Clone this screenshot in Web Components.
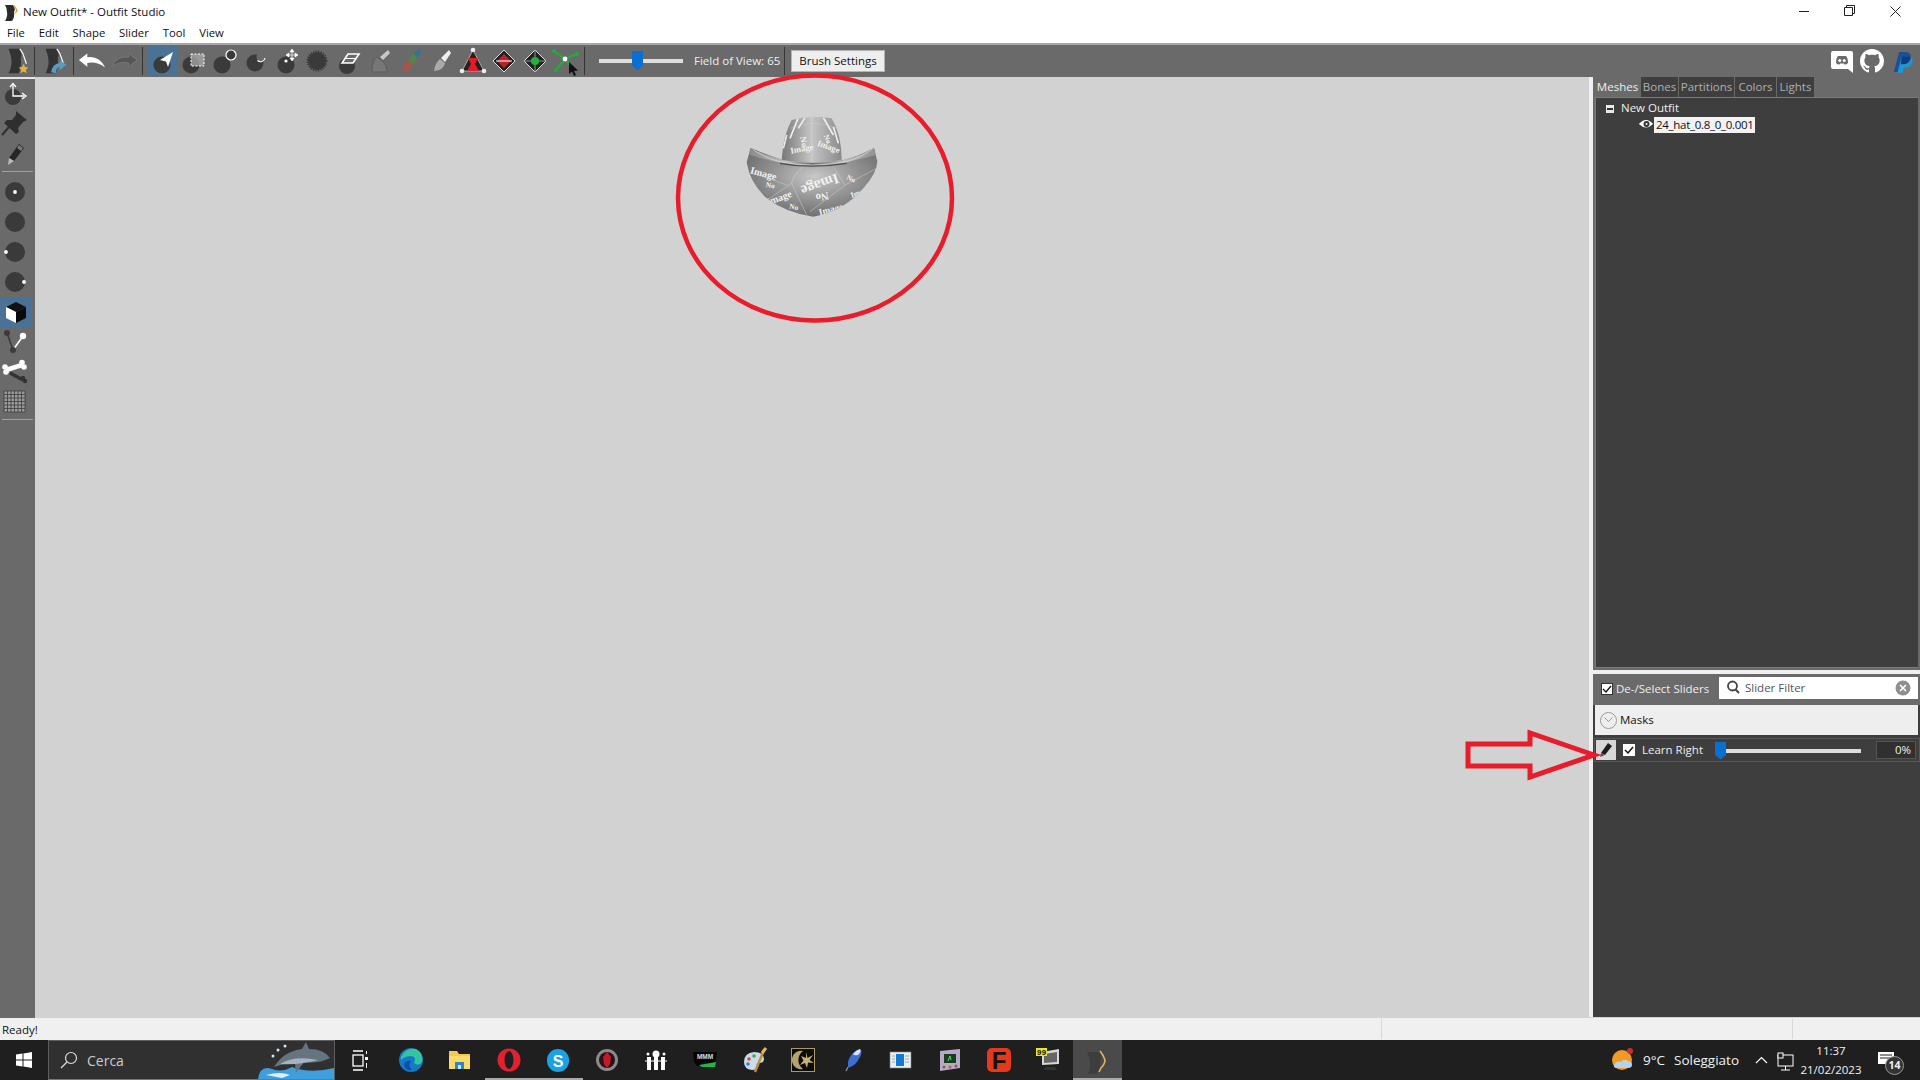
<!DOCTYPE html>
<html lang="it"><head><meta charset="utf-8"><title>New Outfit* - Outfit Studio</title>
<style>
html,body{margin:0;height:100%;overflow:hidden}
body{width:1920px;height:1080px;position:relative;display:flex;flex-direction:column;font:12px "Open Sans","Noto Sans",sans-serif;color:#111;background:#f0f0f0}
</style></head><body>
<os-titlebar></os-titlebar>
<os-menubar></os-menubar>
<os-toolbar></os-toolbar>
<os-workspace>
  <os-sidebar></os-sidebar>
  <os-viewport></os-viewport>
  <os-panel></os-panel>
</os-workspace>
<os-statusbar></os-statusbar>
<os-taskbar></os-taskbar>
<os-annotations></os-annotations>
<script>
const D='#3a3a3a';
const body=(c='#333',edge='#fff')=>`<path d="M7 3H19Q22 9 20 13Q21 20 18 29H7Q11 21 10 14Q9 8 7 3Z" fill="${c}"/><path d="M19 3Q23 8 24 13L26 19" fill="none" stroke="${edge}" stroke-width="1.3"/>`;
const gridLines=()=>{let s='';for(let i=0;i<=6;i++){const p=4+i*3.5;s+=`<path d="M${p} 4V25M4 ${p}H25" stroke="#3c3c3c" stroke-width=".8"/>`}return s};
const ICONS={
 star:body()+`<path d="M23 19l1.6 3.4 3.7.4-2.8 2.5.8 3.7-3.3-1.9-3.3 1.9.8-3.7-2.8-2.5 3.7-.4z" fill="#e2b33c"/>`,
 load:body()+`<path d="M13 28Q14 19 22 18V15L29 20L22 26V22Q18 23 18 29Z" fill="#5a9cc0"/>`,
 undo:`<path d="M2 15L11 8V12Q24 10 30 23Q21 16 11 18V22Z" fill="#fff"/>`,
 redo:`<path d="M30 15L21 8V12Q9 10 3 22Q11 16 21 18V22Z" fill="#555" stroke="#7d7d7d" stroke-width=".8"/>`,
 brush:`<circle cx="15" cy="20" r="8.5" fill="${D}"/><path d="M26 7L13 15L19 16.5L21 22Z" fill="#fff"/>`,
 mask:`<circle cx="13" cy="20" r="8.5" fill="${D}"/><path d="M13 9H26V21H13Z" fill="#aaa" opacity=".75"/><path d="M13 9H26V21H13Z" fill="none" stroke="#fff" stroke-dasharray="2 1.5"/>`,
 inflate:`<circle cx="13" cy="20" r="8.5" fill="${D}"/><circle cx="22" cy="10" r="5" fill="${D}" stroke="#fff" stroke-width="1.2"/>`,
 deflate:`<circle cx="15" cy="18" r="8.5" fill="${D}"/><circle cx="21" cy="12" r="4.5" fill="#6a6a6a"/><path d="M17.5 15.5A4.5 4.5 0 0 0 25 13" fill="none" stroke="#fff" stroke-width="1.2"/>`,
 move:`<circle cx="15" cy="20" r="8.5" fill="${D}"/><circle cx="15" cy="16" r="1.6" fill="#fff"/><path d="M21 6v8M17 10h8M21 4l-2 3h4zM21 16l-2-3h4zM15 10l3-2v4zM27 10l-3-2v4z" stroke="#fff" fill="#fff" stroke-width=".7"/>`,
 smooth:`<circle cx="15" cy="16" r="9" fill="${D}" stroke="${D}" stroke-width="3" stroke-dasharray="1.2 1.2"/>`,
 erase:`<circle cx="14" cy="21" r="8" fill="${D}"/><path d="M9 18L15 9H26L20 18Z" fill="#6a6a6a" stroke="#fff" stroke-width="1.6"/><path d="M12.500 13.500H23" stroke="#fff"/>`,
 color:`<path d="M8 27Q8 15 13 12L18 16Q23 20 23 27Z" fill="#777" stroke="#5c5c5c"/><path d="M16 12L24 5L26 8L19 15Z" fill="#c8c8c8"/>`,
 alpha:`<path d="M7 27Q8 19 13 15L18 19Q16 26 7 27Z" fill="#a2564c"/><path d="M13 15L19 8L22 13L18 19Z" fill="#4d8a4a"/><path d="M19 8L25 3L26 8L22 13Z" fill="#3c6f94"/>`,
 falloff:`<path d="M8 26Q9 18 14 14L19 18Q18 25 8 26Z" fill="#aaa"/><path d="M15 13L23 5L25 8L19 17Z" fill="#eee"/>`,
 vertex:`<path d="M16 5L27 26H5Z" fill="#222" stroke="#aaa"/><path d="M11 13H21L18 19L22 26H10L14 19Z" fill="#e81828"/><circle cx="16" cy="5" r="2.3" fill="#eee"/><circle cx="5" cy="26" r="2.3" fill="#eee"/><circle cx="27" cy="26" r="2.3" fill="#eee"/>`,
 edge:`<path d="M16 5L27 16L16 27L5 16Z" fill="#222" stroke="#ddd"/><path d="M16 9L23 16L16 23L9 16Z" fill="#b8232b"/><path d="M8 16H24" stroke="#fff"/>`,
 face:`<path d="M16 5L27 16L16 27L5 16Z" fill="#222" stroke="#ddd"/><path d="M16 5V27M5 16H27" stroke="#999"/><circle cx="16" cy="16" r="4" fill="#1db53c"/>`,
 tree:`<path d="M4 6L15 14L27 9M15 14L6 25M15 14L22 22" fill="none" stroke="#1fae3c" stroke-width="2"/><circle cx="4" cy="6" r="2" fill="#1fae3c"/><circle cx="27" cy="9" r="2" fill="#1fae3c"/><circle cx="6" cy="25" r="2" fill="#1fae3c"/><circle cx="15" cy="14" r="2.4" fill="#fff"/><path d="M19 17V29L22 26.5L24 31L26 30L24 26L28 25.5Z" fill="#111"/>`,
 xform:`<circle cx="13" cy="14" r="8" fill="${D}"/><path d="M13 2V13H24" fill="none" stroke="#fff" stroke-width="1.3"/><path d="M10 4L13 .5L16 4M22 10L26 13L22 16" fill="none" stroke="#fff" stroke-width="1.3"/>`,
 pin:`<path d="M16 2L27 11L23 13L18 19L19 23L16 25L4 14L7 11L12 11L16 6Z" fill="#2f2f2f"/><path d="M9 18L2 26" stroke="#2f2f2f" stroke-width="2"/>`,
 pencil:`<path d="M19 3L24 7L14 20L9 17Z" fill="#262626"/><path d="M19 4L23 7L21 10L17 7Z" fill="#777"/><path d="M9 17L14 20L8 24Z" fill="#bbb"/>`,
 r0:`<circle cx="15" cy="14" r="10" fill="${D}"/><circle cx="15" cy="14" r="1.9" fill="#fff"/>`,
 r1:`<circle cx="15" cy="14" r="10" fill="${D}"/>`,
 r2:`<circle cx="15" cy="14" r="10" fill="${D}"/><circle cx="6" cy="14" r="1.9" fill="#fff"/>`,
 r3:`<circle cx="15" cy="14" r="10" fill="${D}"/><circle cx="24" cy="14" r="1.9" fill="#fff"/>`,
 cube:`<path d="M16 4L26 9L16 14L6 9Z" fill="#111"/><path d="M6 9L16 14V25L6 20Z" fill="#fff"/><path d="M16 14L26 9V20L16 25Z" fill="#0a0a0a"/>`,
 nodes:`<path d="M7 5L13 22" stroke="${D}" stroke-width="1.6"/><path d="M23 8L13 22" stroke="#fff" stroke-width="1.6"/><circle cx="7" cy="5" r="3" fill="${D}"/><circle cx="23" cy="8" r="3.2" fill="#fff"/><circle cx="13" cy="22" r="3" fill="${D}"/>`,
 bones:`<path d="M10 15L23 22" stroke="#333" stroke-width="3.500"/><circle cx="23" cy="20" r="2.200" fill="#333"/><circle cx="25" cy="23" r="2.200" fill="#333"/><path d="M6 12L22 7" stroke="#fff" stroke-width="4.500"/><circle cx="5" cy="9" r="2.800" fill="#fff"/><circle cx="6" cy="14" r="2.800" fill="#fff"/><circle cx="22" cy="4.500" r="2.800" fill="#fff"/><circle cx="24" cy="9" r="2.800" fill="#fff"/>`,
 grid:`<rect x="4" y="3" width="21" height="21" fill="#9a9a9a"/><g transform="translate(0 -1)">`+gridLines()+`</g>`,
 discord:`<path d="M3 2H21Q23 2 23 4V24L18 20H3Q1 20 1 18V4Q1 2 3 2Z" fill="#fff"/><path d="M6 14Q6 9 8 7H16Q18 9 18 14Q16 16 14.5 15.5L14 14.5H10L9.500 15.500Q8 16 6 14Z" fill="#6a6a6a"/><circle cx="9.800" cy="11.500" r="1.500" fill="#fff"/><circle cx="14.200" cy="11.500" r="1.500" fill="#fff"/>`,
 paypal:`<path d="M7 1H15Q22 2 20 9Q18 15 11 15H9L7 24H1Z" fill="#1d4f96"/><path d="M10 6H17Q24 7 22 13Q20 19 14 19H12L11 25H5Z" fill="#169bd7" opacity=".95"/><path d="M10 6H19Q21 9 20 9Q18 15 11 15H9Z" fill="#123a7c"/>`,
 logo:`<path d="M1 1H9Q12 5 10 8Q11 13 8 17H1Q4 12 3 8Q3 4 1 1Z" fill="#2b2b2b"/><path d="M9 1Q12 3 13 7L11 9" fill="none" stroke="#d9a73a" stroke-width="1.500"/>`,
 win:`<path d="M0 2.400L6.500 1.500V7.500H0ZM7.500 1.400L16 0V7.500H7.500ZM0 8.500H6.500V14.500L0 13.600ZM7.500 8.500H16V16L7.500 14.600Z" fill="#fff"/>`,
 taskview:`<path d="M2 1H12M2 20H12" stroke="#fff" stroke-width="1.300"/><rect x="2" y="5" width="10" height="11" fill="none" stroke="#fff" stroke-width="1.300"/><rect x="14" y="7" width="3" height="3" fill="#fff"/><path d="M15.500 1V4M15.500 13V18" stroke="#fff"/>`,
 e:`<circle cx="12" cy="12" r="12" fill="#1479c8"/><path d="M2 9Q7-1 17 1Q25 5 23 14Q20 19 15 15Q18 9 12 8Q6 8 2 12Z" fill="#35c4a0"/><path d="M5 16Q6 23 13 22Q8 17 12 13Q7 12 5 16Z" fill="#0c4fa6"/>`,
 folder:`<path d="M1 3H9L11 6H22V21H1Z" fill="#f5c851"/><path d="M1 8H22V21H1Z" fill="#fbd96c"/><path d="M7 14H16V21H7Z" fill="#2e86c9"/><path d="M10 17H13V21H10Z" fill="#d0e6f6"/>`,
 opera:`<ellipse cx="12" cy="12" rx="11.500" ry="11.500" fill="#e3202f"/><ellipse cx="12" cy="12" rx="4.500" ry="9" fill="#1f1f1f"/>`,
 skype:`<rect x="1" y="1" width="22" height="23" rx="11" fill="#1aa3e4"/><text x="12" y="18.500" text-anchor="middle" font-family="Liberation Sans" font-weight="700" font-size="16" fill="#fff">S</text>`,
 spider:`<circle cx="12" cy="12" r="11" fill="#8b8b8b"/><circle cx="12" cy="12" r="8" fill="#2a1216"/><path d="M12 4L16 9L15 16L12 20L9 16L8 9Z" fill="#c7182a"/>`,
 ihi:`<path d="M3 9H7V22H3ZM10 8H14V22H10ZM17 9H21V22H17Z" fill="#fff"/><circle cx="12" cy="6" r="3.500" fill="#fff"/><circle cx="4" cy="6" r="1.500" fill="#fff"/><circle cx="20" cy="6" r="1.500" fill="#fff"/><path d="M1 13H23" stroke="#fff"/>`,
 mmm:`<path d="M0 4H24L22 18H4L1 14Z" fill="#050505"/><path d="M6 17L23 14L22 19H9Z" fill="#27b24c"/><text x="12" y="11" text-anchor="middle" font-family="Liberation Sans" font-weight="700" font-size="6.500" fill="#ddd">MMM</text>`,
 palette:`<path d="M2 14Q2 5 12 4Q22 4 22 11Q22 15 17 15Q14 15 15 18Q16 22 10 22Q2 21 2 14Z" fill="#c9dcea"/><circle cx="7" cy="11" r="1.800" fill="#d6463a"/><circle cx="12" cy="8" r="1.800" fill="#4aa650"/><circle cx="6" cy="16" r="1.800" fill="#3f7fd0"/><path d="M13 24L22 2" stroke="#c58a35" stroke-width="2.500"/><path d="M20 5L24 0" stroke="#e9b25a" stroke-width="3"/>`,
 gold:`<rect x=".5" y=".5" width="23" height="23" fill="#0c0c08" stroke="#a99a66"/><path d="M12 3A9.200 9.200 0 1 0 12 21A11 11 0 0 1 12 3Z" fill="#b5a36d"/><path d="M15 4L16.500 10L22 7L18.500 12L23 15L17 14.500L16 20L14 15L9 17L12.500 12.500L10 8L15 10Z" fill="#c6b47b"/>`,
 feather:`<path d="M20 1Q24 4 17 14Q12 20 8 19Q7 11 13 5Q16 2 20 1Z" fill="#3e6fd0"/><path d="M20 1Q22 3 18 7Q14 8 13 6Q16 2 20 1Z" fill="#d7e3f5"/><path d="M8 19L6 23" stroke="#888" stroke-width="1.500"/>`,
 bluewin:`<rect x="1" y="4" width="21" height="16" fill="#e8eef2" stroke="#888" stroke-width=".600"/><rect x="7" y="6" width="8" height="12" fill="#1478d7"/><path d="M3 8H6M3 11H6M3 14H6M16 8H20M16 11H20M16 14H20" stroke="#9aa"/>`,
 device:`<path d="M2 3L22 1V20L2 23Z" fill="#b7aac6"/><rect x="6" y="6" width="12" height="9" fill="#1f3a22"/><path d="M10 13L12 8L13 12" stroke="#59e05f" fill="none"/><circle cx="6" cy="19" r="1.500" fill="#764"/><circle cx="12" cy="19" r="1.500" fill="#c55"/><circle cx="18" cy="18" r="1.500" fill="#764"/>`,
 redf:`<rect x="0" y="0" width="24" height="24" rx="5" fill="#e5381c"/><text x="12" y="21" text-anchor="middle" font-family="Liberation Sans" font-weight="700" font-size="24" fill="#111">F</text>`,
 monitor:`<path d="M6 4L23 1V16L6 17Z" fill="#d8d8d8"/><path d="M8 6L21 4V14L8 15Z" fill="#666"/><path d="M9 19H19L21 22H8Z" fill="#333"/><rect x="0" y="0" width="11" height="8" fill="#e7e72c"/><text x="5.500" y="7" text-anchor="middle" font-family="Liberation Mono" font-weight="700" font-size="8" fill="#111">99</text>`,
 studio:`<path d="M2 4H15Q17 10 15 14Q16 20 12 26H3Q6 18 5 13Q4 8 2 4Z" fill="#3d3d3d"/><path d="M15 3Q19 8 20 12Q20 16 16 20L14 24" fill="none" stroke="#e0b85a" stroke-width="1.600"/>`,
 weather:`<circle cx="11" cy="12" r="10" fill="#f29a26"/><path d="M3 17Q6 12 10 14Q13 10 17 13Q21 13 21 17Q21 20 17 20H6Q2 20 3 17Z" fill="#b6d2ea"/><circle cx="19" cy="3" r="3" fill="#c9302a"/>`,
 network:`<rect x="1" y="3" width="15" height="11" fill="none" stroke="#fff"/><rect x="1" y="1" width="5" height="5" fill="#1f1f1f" stroke="#fff"/><path d="M8.500 14V18M4 18H13" stroke="#fff"/>`,
 note:`<path d="M1 1H17V13H1Z" fill="#fff"/><path d="M3 4H15M3 7H15" stroke="#1f1f1f"/>`,
 search:`<circle cx="7.500" cy="6" r="4.500" fill="none" stroke="#444" stroke-width="1.800"/><path d="M10.500 9.500L14 13" stroke="#444" stroke-width="2"/>`,
 clear:`<circle cx="8" cy="8" r="7.500" fill="#8f8f8f"/><path d="M5 5L11 11M11 5L5 11" stroke="#fff" stroke-width="1.600"/>`,
 eye:`<path d="M1 7Q8-1 15 7" fill="#fff"/><path d="M1 7Q8 0 15 7Q8 14 1 7Z" fill="#fff"/><circle cx="8.500" cy="7" r="3" fill="#333"/><circle cx="8.500" cy="7" r="1" fill="#fff"/>`,
 github:`<path fill="#fff" d="M8 0C3.58 0 0 3.58 0 8c0 3.54 2.29 6.53 5.47 7.59.4.07.55-.17.55-.38 0-.19-.01-.82-.01-1.49-2.01.37-2.53-.49-2.69-.94-.09-.23-.48-.94-.82-1.13-.28-.15-.68-.52-.01-.53.63-.01 1.08.58 1.23.82.72 1.21 1.87.87 2.33.66.07-.52.28-.87.51-1.07-1.78-.2-3.64-.89-3.64-3.95 0-.87.31-1.59.82-2.15-.08-.2-.36-1.02.08-2.12 0 0 .67-.21 2.2.82.64-.18 1.32-.27 2-.27.68 0 1.36.09 2 .27 1.53-1.04 2.2-.82 2.2-.82.44 1.1.16 1.92.08 2.12.51.56.82 1.27.82 2.15 0 3.07-1.87 3.75-3.65 3.95.29.25.54.73.54 1.48 0 1.07-.01 1.93-.01 2.2 0 .21.15.46.55.38A8.013 8.013 0 0016 8c0-4.42-3.58-8-8-8z"/>`
};
customElements.define('os-icon',class extends HTMLElement{
 connectedCallback(){
  if(this.shadowRoot)return;
  const s=+this.getAttribute('size')||32,v=+this.getAttribute('vb')||s,h=+this.getAttribute('h')||s;
  this.attachShadow({mode:'open'}).innerHTML=`<style>:host{display:block;flex:none;width:${s}px;height:${h}px}svg{display:block;overflow:visible}</style><svg width="${s}" height="${h}" viewBox="0 0 ${v} ${v*h/s}">${ICONS[this.getAttribute('name')]||''}</svg>`;
 }
});
const def=(name,html)=>customElements.define(name,class extends HTMLElement{constructor(){super();this.attachShadow({mode:'open'}).innerHTML=html}});
const ic=(n,s=32,v)=>`<os-icon name="${n}" size="${s}" vb="${v||s}"></os-icon>`;

def('os-titlebar',`<style>:host{display:flex;align-items:center;height:22px;flex:none;background:#fff;font-size:11.500px;color:#111}
.t{margin-left:5px}.l{margin-left:4px}.w{margin-left:auto;display:flex;margin-right:2px}.w div{width:45.500px;height:22px;display:flex;align-items:center;justify-content:center}
svg{display:block}</style>
<div class="l">${ic('logo',14,14)}</div><div class="t">New Outfit* - Outfit Studio</div>
<div class="w"><div><svg width="11" height="11"><path d="M0 5.500H10" stroke="#222"/></svg></div>
<div style="padding-bottom:2px;box-sizing:border-box"><svg width="11" height="11"><path d="M.5 2.500H8.500V10.500H.5ZM2.500 2.500V.5H10.500V8.500H8.500" fill="none" stroke="#222"/></svg></div>
<div><svg width="11" height="11"><path d="M.5.5L10.500 10.500M10.500.5L.5 10.500" stroke="#222"/></svg></div></div>`);

def('os-menubar',`<style>:host{display:flex;align-items:center;height:21px;flex:none;background:#fff;font-size:11.300px;color:#111;border-bottom:2px solid #a8a8a8;padding-left:0}
span{padding:0 7px 0 7px}span+span{margin-left:-.2px}</style><span>File</span><span>Edit</span><span>Shape</span><span>Slider</span><span>Tool</span><span>View</span>`);

const TOOLS=['brush','mask','inflate','deflate','move','smooth','erase','color','alpha','falloff','vertex','edge','face','tree'];
def('os-toolbar',`<style>:host{display:flex;align-items:center;height:32px;flex:none;background:#6a6a6a;color:#eee;font-size:11.500px}
.b{display:flex;justify-content:center;align-items:center;height:32px}.tool{width:31px}.on{background:#4a7296;height:30px;margin-left:0}
.sep{width:1px;height:28px;background:#353535;flex:none}
.sl{position:relative;width:84px;height:4px;background:#ddd;margin:0 11px 0 14px;flex:none}
.sl i{position:absolute;left:33px;top:-8px;width:11px;height:19px;background:#0a6fd0;clip-path:polygon(0 0,100% 0,100% 75%,50% 100%,0 75%)}
.fov{width:90px;white-space:nowrap;padding-bottom:1px}
button{all:unset;box-sizing:border-box;width:94px;height:22px;text-align:center;background:#eee;color:#111;border:1px solid #b4b4b4;margin-left:6px;line-height:20px}
.r{margin-left:auto;display:flex;align-items:center}</style>
<div class="b" style="width:34px;margin-left:0">${ic('star',30,32)}</div><div class="sep"></div>
<div class="b" style="width:38px">${ic('load',30,32)}</div><div class="sep"></div>
<div class="b" style="width:35px">${ic('undo',30,32)}</div><div class="b" style="width:33px;padding-right:3px;box-sizing:border-box">${ic('redo',30,32)}</div><div class="sep"></div>
<div style="width:4px"></div>
${TOOLS.map((t,i)=>`<div class="b tool ${i?'':'on'}">${ic(t,32,32)}</div>`).join('')}
<div style="width:3px"></div><div class="sep"></div><div class="sl"><i></i></div><div class="fov">Field of View: 65</div><div class="sep"></div>
<button>Brush Settings</button>
<div class="r"><div style="margin-right:6px">${ic('discord',24,24)}</div><div style="margin-right:9px">${ic('github',24,16)}</div><div style="margin-right:6px">${ic('paypal',21,24)}</div></div>`);

def('os-workspace',`<style>:host{display:flex;flex:none;height:941px;background:#d2d2d2}</style><slot></slot>`);

const side=(n,h,c)=>`<div class="t ${c||''}" style="height:${h}px">${ic(n,28,28)}</div>`;
def('os-sidebar',`<style>:host{display:block;flex:none;width:35px;background:#6a6a6a;box-sizing:border-box;border-top:2px solid #e6e6e6;padding-top:5px}
.t{width:32px;display:flex;align-items:center}.on{background:#4a7296}
hr{border:0;height:1px;background:#a0a0a0;margin:0 2px 0 2px;width:31px}</style>
${side('xform',26)}${side('pin',26)}<div style="height:6px"></div>${side('pencil',26)}<div style="height:3px"></div><hr><div style="height:5px"></div>
${side('r0',30)}${side('r1',30)}${side('r2',30)}${side('r3',30)}${side('cube',30,'on')}${side('nodes',30)}${side('bones',30)}${side('grid',30)}
<div style="height:2px"></div><hr>`);

def('os-viewport',`<style>:host{display:block;flex:none;width:1554px;height:940px;background:#d2d2d2;position:relative;overflow:hidden}
os-hat{position:absolute;left:695px;top:28px}</style><os-hat></os-hat>`);

const img=(x,y,r,s,t)=>`<text transform="translate(${x} ${y}) rotate(${r})" font-family="Liberation Serif" font-weight="700" font-size="${s}" text-anchor="middle" fill="#f2f2f2">${t}</text>`;
def('os-hat',`<style>:host{display:block;width:160px;height:120px}svg{display:block}</style>
<svg width="160" height="120" viewBox="0 0 480 360"><defs>
<radialGradient id="a" cx=".52" cy=".42" r=".6"><stop offset="0" stop-color="#c8c8c8"/><stop offset=".5" stop-color="#979797"/><stop offset="1" stop-color="#6e6e6e"/></radialGradient>
<linearGradient id="c" x1="0" x2="1"><stop offset="0" stop-color="#777"/><stop offset=".5" stop-color="#c6c6c6"/><stop offset="1" stop-color="#8a8a8a"/></linearGradient>
<linearGradient id="b" x1="0" x2="1"><stop offset="0" stop-color="#8a8a8a"/><stop offset=".3" stop-color="#bdbdbd"/><stop offset=".5" stop-color="#6d6d6d"/><stop offset=".75" stop-color="#bdbdbd"/><stop offset="1" stop-color="#8f8f8f"/></linearGradient>
<clipPath id="k"><path d="M50 172L62 128Q110 150 160 165Q250 182 340 165Q395 150 432 128L442 170Q440 205 400 250Q340 320 250 335Q170 325 110 280Q60 235 50 172Z"/></clipPath>
<clipPath id="j"><path d="M185 45Q240 30 305 40Q335 90 335 165Q250 185 155 165Q160 90 185 45Z"/></clipPath></defs>
<path d="M185 45Q240 30 305 40Q335 90 335 165Q250 185 155 165Q160 90 185 45Z" fill="url(#c)"/>
<g clip-path="url(#j)">${img(213,112,80,26,'No')}${img(217,140,-10,26,'Image')}${img(293,133,20,26,'Image')}${img(286,105,70,22,'No')}
<path d="M205 38L180 100M225 38L205 70M280 38L310 90M310 65L325 115M170 90L160 130" stroke="#eee" stroke-width="5"/><path d="M245 35V170M180 70Q250 40 320 70" stroke="#ddd" fill="none"/></g>
<path d="M50 172L62 128Q110 150 160 165Q250 182 340 165Q395 150 432 128L442 170Q440 205 400 250Q340 320 250 335Q170 325 110 280Q60 235 50 172Z" fill="url(#a)"/>
<g clip-path="url(#k)">
${img(265,225,160,44,'Image')}${img(275,265,170,32,'No')}${img(98,215,15,30,'Image')}${img(120,248,10,22,'No')}
${img(150,288,-20,30,'Image')}${img(190,313,10,22,'No')}${img(305,322,-15,28,'Image')}${img(360,228,25,22,'No')}${img(395,268,-20,24,'Image')}
<path d="M220 185Q190 210 185 235L230 330M185 235L90 300M310 185L345 240L240 320M345 240L440 190M60 200L170 240" stroke="#ddd" stroke-width="1.300" fill="none"/>
<path d="M55 130Q110 150 160 165Q250 182 340 165Q395 150 432 128L440 150Q395 160 340 174Q250 186 160 174Q100 164 55 148Z" fill="url(#b)"/>
<path d="M62 128Q100 158 150 170Q240 190 350 170Q400 155 432 128" stroke="#e2e2e2" stroke-width="2" fill="none"/>
<path d="M150 175Q240 192 350 175" stroke="#4a4a4a" stroke-width="4" fill="none"/>
</g></svg>`);

def('os-panel',`<style>:host{display:flex;flex-direction:column;flex:none;width:331px;height:940px;box-sizing:border-box;border-left:4px solid #f0f0f0;color:#eee;font-size:11.500px}
.up{height:593px;background:#6a6a6a;flex:none;box-sizing:border-box;padding:0 2px 2px 2px;display:flex;flex-direction:column}
.tabs{display:flex;gap:1px;height:20px;flex:none}.tabs span{display:flex;align-items:center;justify-content:center;background:#3e3e3e;color:#b0b0b0;padding-bottom:2px;box-sizing:border-box}
.tabs .a{background:#6a6a6a;color:#eee}
.tree{flex:1;background:#3e3e3e;border:1px solid #7a7a7a;border-width:1px 0 1px 1px;padding:1px 0 0 10px}
.r1{display:flex;align-items:center;height:17px}.box{width:8px;height:8px;background:#e8e8e8;position:relative;margin-right:7px;flex:none;border:0;margin-top:2px}
.box:after{content:"";position:absolute;left:1px;right:1px;top:3px;height:2px;background:#333}
.r2{display:flex;align-items:center;height:18px;padding-left:32px}.sel{background:#f2f2f2;color:#111;margin-left:0;padding:0 2px;height:16px;line-height:15px;width:97px;letter-spacing:-.3px;white-space:nowrap;overflow:hidden}
.sash{height:4px;background:#f0f0f0;flex:none}
.low{flex:1;background:#3e3e3e;display:flex;flex-direction:column}
.f{height:31px;background:#6a6a6a;display:flex;align-items:center;padding-left:8px;flex:none}
.cb{width:12px;height:12px;background:#fff;border:1px solid #333;box-sizing:border-box;flex:none;display:flex;align-items:center;justify-content:center}
.f .cb{margin-top:-1px}
.f .lab{margin-left:3px;width:103px;white-space:nowrap;padding-bottom:2px}.inp{width:199px;height:22px;background:#fff;color:#555;display:flex;align-items:center;padding:0 7px 0 6px;box-sizing:border-box;gap:4px;margin-top:-3px}
.inp span{flex:1;padding-bottom:2px}.m{height:30px;margin:0 2px;background:#eee;color:#111;display:flex;align-items:center;flex:none;padding-left:5px;gap:3px}
.m span{padding-bottom:2px}
.o{width:17px;height:17px;border:1px solid #999;border-radius:50%;display:flex;align-items:center;justify-content:center;box-sizing:border-box}
.row{height:24px;margin:3px 0 0 1px;border:1px solid #595959;box-sizing:border-box;display:flex;align-items:center;flex:none;padding-left:1px}
.ed{width:20px;height:20px;background:#d8d8d8;display:flex;align-items:center;justify-content:center;flex:none}
.row .cb{margin-left:7px;border:0;background:#fff}.row .nm{margin-left:7px;width:73px;white-space:nowrap;padding-bottom:2px}
.tr{position:relative;width:146px;height:4px;background:#ddd;flex:none;margin-top:1px}.tr i{position:absolute;left:0;top:-7px;width:11px;height:18px;background:#0a6fd0;clip-path:polygon(0 0,100% 0,100% 75%,50% 100%,0 75%)}
.pc{width:40px;height:18px;margin-left:15px;background:#303030;border:1px solid #555;box-sizing:border-box;text-align:right;padding-right:4px;line-height:16px;flex:none}
svg{display:block}</style>
<div class="up"><div class="tabs"><span class="a" style="width:45px">Meshes</span><span style="width:37px">Bones</span><span style="width:55px">Partitions</span><span style="width:41px">Colors</span><span style="width:37px">Lights</span></div>
<div class="tree"><div class="r1"><div class="box"></div><span>New Outfit</span></div><div class="r2">${ic('eye',16,16)}<div class="sel">24_hat_0.8_0_0.001</div></div></div></div>
<div class="sash"></div>
<div class="low"><div class="f"><div class="cb"><svg width="10" height="10"><path d="M1 5L4 8L9 2" fill="none" stroke="#111" stroke-width="1.300"/></svg></div><div class="lab">De-/Select Sliders</div>
<div class="inp">${ic('search',16,16)}<span>Slider Filter</span>${ic('clear',16,16)}</div></div>
<div class="m"><div class="o"><svg width="9" height="6"><path d="M.5.5L4.500 4.500L8.500.5" fill="none" stroke="#999"/></svg></div><span>Masks</span></div>
<div class="row"><div class="ed"><svg width="16" height="16" viewBox="0 0 16 16"><path d="M10 1L14 4L7 13L3 11Z" fill="#1e1e1e"/><path d="M3 11L7 13L2 15Z" fill="#555"/></svg></div>
<div class="cb"><svg width="10" height="10"><path d="M1 5L4 8L9 2" fill="none" stroke="#111" stroke-width="1.500"/></svg></div><div class="nm">Learn Right</div>
<div class="tr"><i></i></div><div class="pc">0%</div></div></div>`);

def('os-statusbar',`<style>:host{display:flex;align-items:center;flex:none;height:22px;background:#f0f0f0;font-size:11.500px;color:#111;padding-left:2px;position:relative}
i{width:1px;height:20px;background:#d9d9d9;flex:none}</style><span style="width:1379px">Ready!</span><i></i><span style="width:410px"></span><i></i>`);

const TB=['e','folder','opera','skype','spider','ihi','mmm','palette','gold','feather','bluewin','device','redf','monitor','studio'];
def('os-taskbar',`<style>:host{display:flex;align-items:stretch;flex:none;height:40px;background:#1f1f1f;color:#eee;font-size:13.500px}
.st{width:48px;display:flex;align-items:center;justify-content:center;flex:none}
.se{width:287px;flex:none;background:#303030;border:1px solid #5e5e5e;border-bottom-color:#777;box-sizing:border-box;display:flex;align-items:center;position:relative;padding-left:11px;color:#ccc;font-size:14px;overflow:hidden}
.se span{margin-left:9px}.wh{position:absolute;right:0;bottom:0}
.tv{width:51.500px;display:flex;align-items:center;justify-content:center;flex:none}
.c{width:49px;display:flex;align-items:center;justify-content:center;flex:none;box-sizing:border-box;border-bottom:2px solid transparent;padding-top:1px}
.u{border-bottom:2px solid #aaa}.u2{background:#4a4a4a;border-bottom:2px solid #aaa}
.tray{margin-left:auto;display:flex;align-items:center;color:#f0f0f0;font-size:13.500px}
.cl{font-size:11.500px;text-align:center;width:72px;line-height:19px}
.n{position:relative;width:30px;margin:0 13px 0 10px;height:40px;display:flex;align-items:center}
.bd{position:absolute;left:8px;top:16px;width:17px;height:17px;border:1px solid #999;border-radius:50%;background:#333;text-align:center;font-size:10.500px;line-height:17px;font-weight:700}
svg{display:block}</style>
<div class="st">${ic('win',16,16)}</div>
<div class="se"><svg width="18" height="18" viewBox="0 0 18 18"><circle cx="11" cy="7" r="5.500" fill="none" stroke="#ddd" stroke-width="1.200"/><path d="M7 11L1 17" stroke="#ddd" stroke-width="1.300"/></svg><span>Cerca</span>
<svg class="wh" width="76" height="38" viewBox="0 0 76 38"><path d="M0 38Q2 24 14 28Q24 32 34 26Q52 33 76 27V38Z" fill="#3f9fdc"/><path d="M8 34Q22 30 32 34L24 37Z" fill="#dcefff"/><path d="M16 26Q26 10 44 8L48 1L51 8Q66 8 72 17Q60 23 46 21L38 32L37 23Q26 22 16 26Z" fill="#66747f"/><path d="M22 23Q36 14 60 19Q44 24 22 23Z" fill="#a3b3bf"/><circle cx="15" cy="15" r="1.500" fill="#cfe7f7"/><circle cx="20" cy="9" r="1.500" fill="#cfe7f7"/><circle cx="27" cy="5" r="1.500" fill="#cfe7f7"/></svg></div>
<div class="tv">${ic('taskview',20,20)}</div>
${TB.map(n=>`<div class="c ${n=='opera'||n=='skype'?'u':''} ${n=='studio'?'u2':''}">${ic(n,24,24)}</div>`).join('')}
<div class="tray"><div style="margin-right:8px">${ic('weather',24,24)}</div><div style="white-space:pre;width:98px;word-spacing:1px">9°C  Soleggiato</div>
<div style="margin:0 9px 0 14px"><svg width="13" height="8"><path d="M1 7L6.500 1.500L12 7" fill="none" stroke="#fff" stroke-width="1.200"/></svg></div>${ic('network',17,17)}
<div class="cl" style="margin-left:1px">11:37<br>21/02/2023</div>
<div class="n">${ic('note',18,18)}<div class="bd">14</div></div></div>`);

def('os-annotations',`<style>:host{position:absolute;left:0;top:0;width:1920px;height:1080px;pointer-events:none}svg{display:block}</style>
<svg width="1920" height="1080"><ellipse cx="815" cy="198" rx="137" ry="122.500" fill="none" stroke="#e81c2a" stroke-width="4.500"/>
<path d="M1594 755L1530 733V744H1468V766H1530V777Z" fill="none" stroke="#e81c2a" stroke-width="5"/></svg>`);
</script>
</body></html>
